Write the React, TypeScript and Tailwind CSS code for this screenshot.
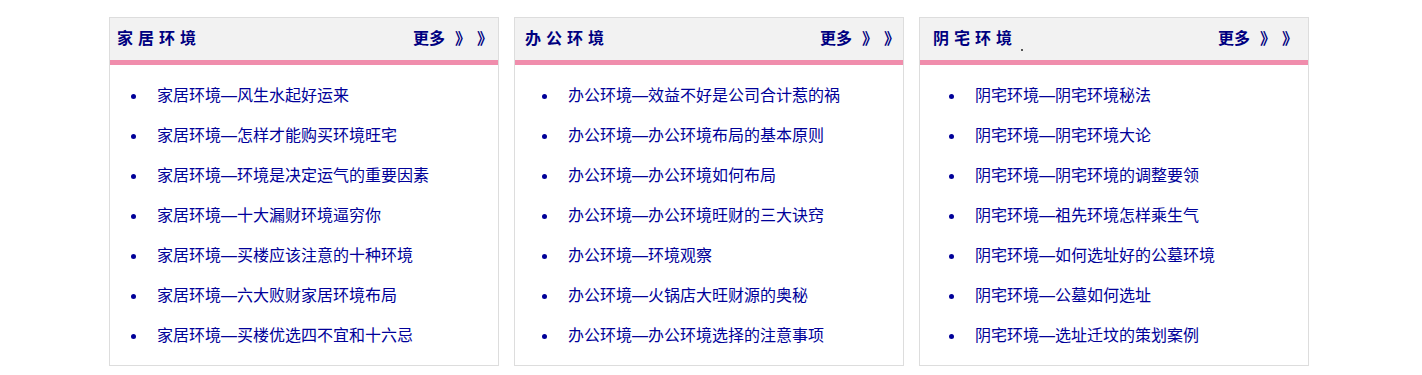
const boxes = [
  {
    title: '家居环境',
    titlePad: 'pl-[7px]',
    morePad: 'pr-[5px]',
    listPad: 'pl-[21px]',
    dot: false,
    items: [
      '家居环境—风生水起好运来',
      '家居环境—怎样才能购买环境旺宅',
      '家居环境—环境是决定运气的重要因素',
      '家居环境—十大漏财环境逼穷你',
      '家居环境—买楼应该注意的十种环境',
      '家居环境—六大败财家居环境布局',
      '家居环境—买楼优选四不宜和十六忌',
    ],
  },
  {
    title: '办公环境',
    titlePad: 'pl-[10px]',
    morePad: 'pr-[3px]',
    listPad: 'pl-[27px]',
    dot: false,
    items: [
      '办公环境—效益不好是公司合计惹的祸',
      '办公环境—办公环境布局的基本原则',
      '办公环境—办公环境如何布局',
      '办公环境—办公环境旺财的三大诀窍',
      '办公环境—环境观察',
      '办公环境—火锅店大旺财源的奥秘',
      '办公环境—办公环境选择的注意事项',
    ],
  },
  {
    title: '阴宅环境',
    titlePad: 'pl-[13px]',
    morePad: 'pr-[10px]',
    listPad: 'pl-[29px]',
    dot: true,
    items: [
      '阴宅环境—阴宅环境秘法',
      '阴宅环境—阴宅环境大论',
      '阴宅环境—阴宅环境的调整要领',
      '阴宅环境—祖先环境怎样乘生气',
      '阴宅环境—如何选址好的公墓环境',
      '阴宅环境—公墓如何选址',
      '阴宅环境—选址迁坟的策划案例',
    ],
  },
]

export default function App() {
  return (
    <div className="bg-white w-[1422px] h-[375px] pt-[17px] font-['Liberation_Sans','Noto_Sans_CJK_SC',sans-serif]">
      <div className="flex gap-[15px] ml-[109px]">
        {boxes.map((box) => (
          <div key={box.title} className="w-[390px] h-[349px] border border-[#dddddd] flex flex-col">
            {/* header */}
            <div className={`h-[42px] bg-[#f2f2f2] flex items-center justify-between pb-[1px] ${box.titlePad} ${box.morePad}`}>
              <div className="flex items-end">
                <span className="text-[16px] font-bold text-[#000080] tracking-[5px] leading-none">
                  {box.title}
                </span>
                {box.dot && <span className="w-[2px] h-[2px] bg-[#555] ml-[4px] mb-[-4px]"></span>}
              </div>
              <a className="flex items-center text-[16px] font-bold text-[#000080] leading-none">
                <span>更多</span>
                <span className="ml-[10px]">》</span>
                <span className="ml-[6px]">》</span>
              </a>
            </div>
            <div className="h-[5px] bg-[#f08dac]"></div>

            {/* list */}
            <ul className={`pt-[11px] ${box.listPad}`}>
              {box.items.map((item) => (
                <li key={item} className="h-[40px] flex items-center">
                  <span className="w-[5px] h-[5px] rounded-full bg-[#000099] mr-[21px]"></span>
                  <span className="text-[16px] text-[#000099] leading-none">{item}</span>
                </li>
              ))}
            </ul>
          </div>
        ))}
      </div>
    </div>
  )
}
